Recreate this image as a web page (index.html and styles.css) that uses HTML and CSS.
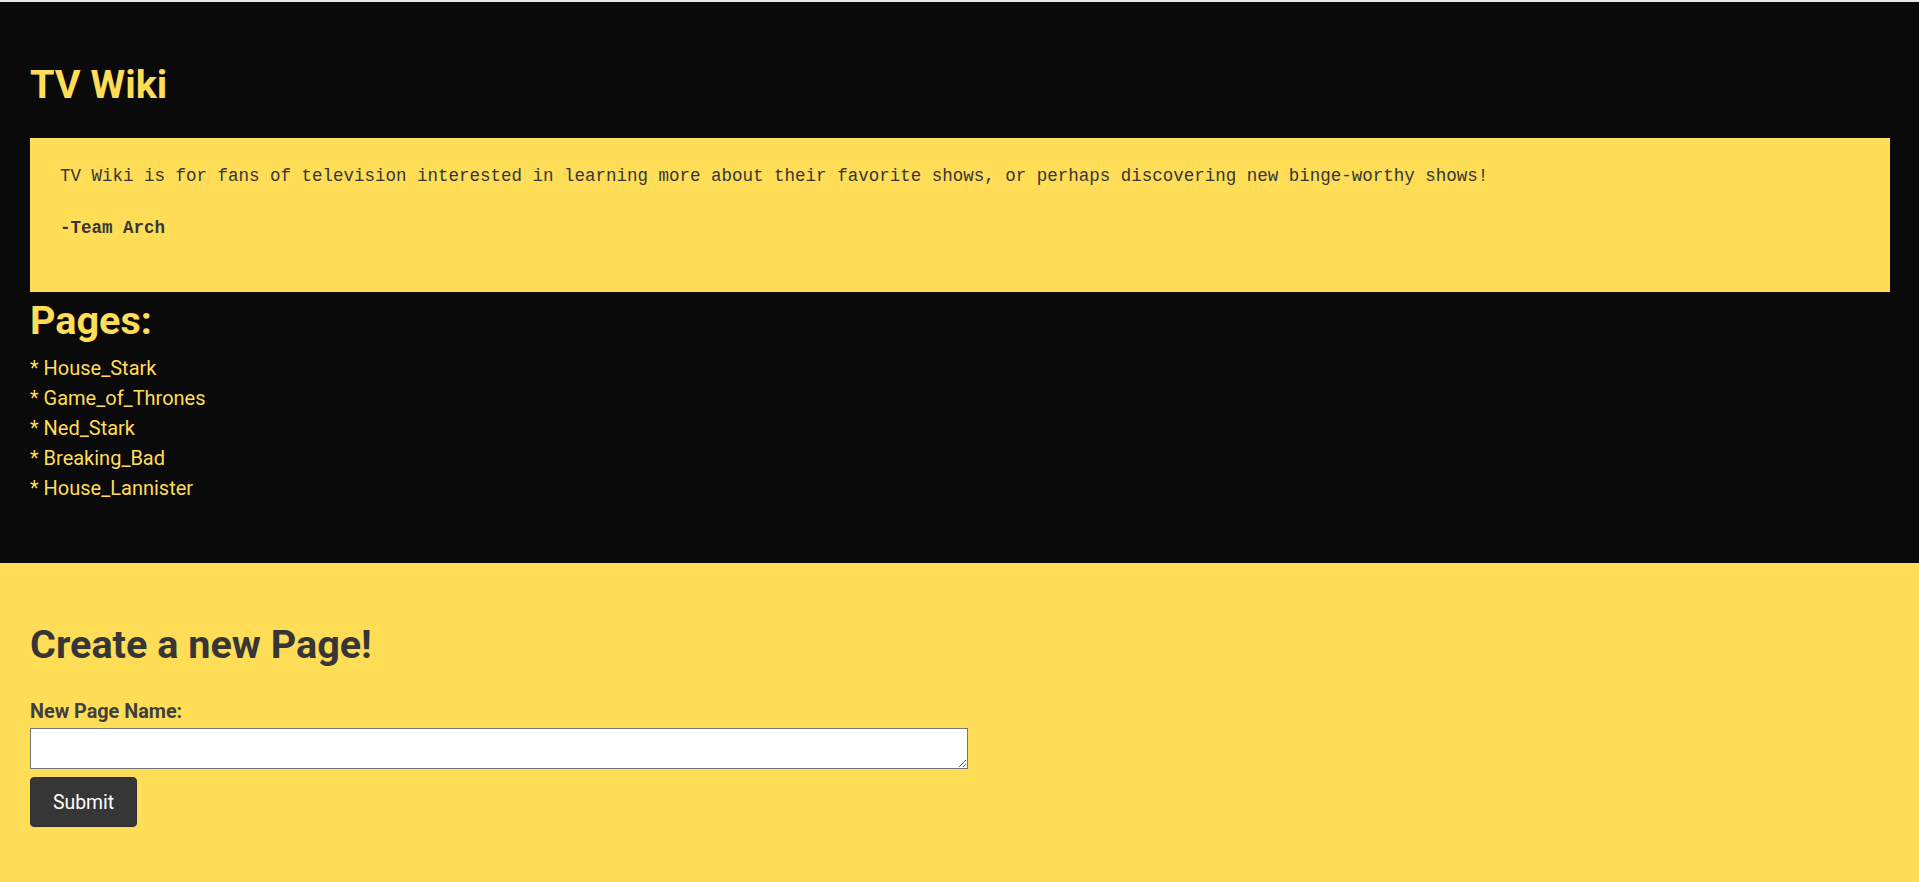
FILE: index.html
```html
<!DOCTYPE html>
<html lang="en">
<head>
<meta charset="utf-8">
<title>TV Wiki</title>
<link rel="stylesheet" href="styles.css">
</head>
<body>
<div class="page">
  <section class="hero">
    <h1 class="title">TV Wiki</h1>
    <div class="intro">
      <p class="intro-line">TV Wiki is for fans of television interested in learning more about their favorite shows, or perhaps discovering new binge-worthy shows!</p>
      <p class="intro-line intro-sign">-Team Arch</p>
    </div>
    <h2 class="pages-title">Pages:</h2>
    <ul class="page-list">
      <li>* House_Stark</li>
      <li>* Game_of_Thrones</li>
      <li>* Ned_Stark</li>
      <li>* Breaking_Bad</li>
      <li>* House_Lannister</li>
    </ul>
  </section>
  <section class="create">
    <h2 class="create-title">Create a new Page!</h2>
    <form class="create-form">
      <label class="label" for="pname">New Page Name:</label>
      <textarea id="pname" class="textarea"></textarea>
      <button type="button" class="button">Submit</button>
    </form>
  </section>
</div>
</body>
</html>
```

FILE: styles.css
```css
html, body {
  margin: 0;
  padding: 0;
  background: #ffdd57;
}

body {
  font-family: Roboto, "Liberation Sans", Arial, sans-serif;
  color: #363636;
}

.page {
  border-top: 2px solid #e8e8e8;
  min-height: 880px;
  display: flex;
  flex-direction: column;
}

.hero {
  background: #0a0a0a;
  padding: 59px 29px 60px 30px;
  display: flex;
  flex-direction: column;
}

.title,
.pages-title,
.create-title {
  margin: 0;
  font-size: 39.6px;
  line-height: 48px;
  font-weight: 700;
}

.title,
.pages-title {
  color: #ffdd57;
}

.intro {
  margin-top: 29px;
  background: #ffdd57;
  padding: 25px 30px 51px;
  font-family: "Liberation Mono", "DejaVu Sans Mono", monospace;
  font-size: 17.5px;
  line-height: 26px;
  color: #363636;
  display: flex;
  flex-direction: column;
  gap: 26px;
}

.intro-line {
  margin: 0;
}

.intro-sign {
  font-weight: 700;
}

.pages-title {
  margin-top: 5px;
}

.page-list {
  list-style: none;
  margin: 8px 0 0;
  padding: 0;
  font-size: 20px;
  line-height: 30px;
  color: #ffdd57;
}

.create {
  flex: 1;
  background: #ffdd57;
  padding: 58px 30px 40px;
}

.create-title {
  color: #363636;
}

.create-form {
  margin-top: 32px;
  display: flex;
  flex-direction: column;
  align-items: flex-start;
}

.label {
  font-size: 19.8px;
  line-height: 22px;
  font-weight: 700;
  color: #3f3f3f;
}

.textarea {
  margin: 5px 0 0;
  box-sizing: border-box;
  width: 938px;
  height: 41px;
  border: 1px solid #767676;
  border-radius: 0;
  background: #fff;
  padding: 2px;
  font-family: "Liberation Mono", monospace;
  font-size: 13px;
}

.button {
  margin-top: 8px;
  box-sizing: border-box;
  height: 50px;
  padding: 0 22px;
  background: #363636;
  color: #fff;
  border: 1px solid #2f2f2f;
  border-radius: 4px;
  font-family: Roboto, "Liberation Sans", Arial, sans-serif;
  font-size: 19.4px;
  cursor: pointer;
}
```
